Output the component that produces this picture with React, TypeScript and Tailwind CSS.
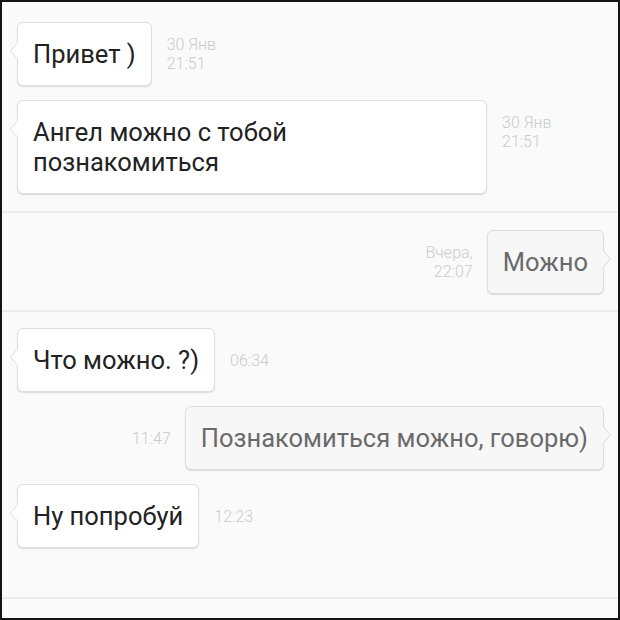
import React from "react";

type Msg = {
  id: number;
  text: React.ReactNode;
  time: string[];
  out?: boolean;
  wide?: boolean;
};

const groups: Msg[][] = [
  [
    { id: 1, text: "Привет )", time: ["30 Янв", "21:51"] },
    {
      id: 2,
      text: (
        <>
          Ангел можно с тобой
          <br />
          познакомиться
        </>
      ),
      time: ["30 Янв", "21:51"],
      wide: true,
    },
  ],
  [{ id: 3, text: "Можно", time: ["Вчера,", "22:07"], out: true }],
  [
    { id: 4, text: "Что можно. ?)", time: ["06:34"] },
    { id: 5, text: "Познакомиться можно, говорю)", time: ["11:47"], out: true },
    { id: 6, text: "Ну попробуй", time: ["12:23"] },
  ],
];

const Tail = ({ out, bg }: { out?: boolean; bg: string }) => (
  <svg
    width="9"
    height="18"
    viewBox="0 0 9 18"
    className={`absolute top-[19px] ${out ? "right-[-9px] scale-x-[-1]" : "left-[-9px]"}`}
  >
    <path d="M9 0 L1 9 L9 18 Z" fill={bg} />
    <path d="M9 0.5 L1.5 9 L9 17.5" fill="none" stroke="#dcdcdc" strokeWidth="1" />
  </svg>
);

const Time = ({ lines, out }: { lines: string[]; out?: boolean }) => (
  <div className="mt-[17px] h-[30px] flex items-center shrink-0">
    <div className={`text-[16px] leading-[19px] font-light text-[#cacaca] ${out ? "text-right" : "text-left"}`}>
      {lines.map((l) => (
        <div key={l}>{l}</div>
      ))}
    </div>
  </div>
);

const Bubble = ({ msg }: { msg: Msg }) => {
  const bg = msg.out ? "#f7f7f7" : "#ffffff";
  return (
    <div
      className={`relative rounded-[6px] border border-[#dedede] shadow-[0_1px_1px_rgba(0,0,0,0.13)] pl-[15px] pr-[15px] pt-[16px] pb-[16px] text-[25.5px] leading-[30px] ${
        msg.out ? "bg-[#f7f7f7] text-[#6a6a6a]" : "bg-white text-[#222222]"
      } ${msg.wide ? "w-[470px]" : "max-w-[470px]"}`}
    >
      <Tail out={msg.out} bg={bg} />
      {msg.text}
    </div>
  );
};

export default function App() {
  return (
    <div className="w-[620px] h-[620px] bg-[#fafafa] border-2 border-[#151515] overflow-hidden font-['Roboto',sans-serif]">
      {groups.map((g, gi) => (
        <div
          key={gi}
          className={`flex flex-col gap-[14px] pl-[15px] pr-[14px] border-b-2 border-[#ececec] ${
            gi === 0 ? "pt-[20px] pb-[17px]" : gi === 1 ? "pt-[17px] pb-[16px]" : "pt-[16px] pb-[49px]"
          }`}
        >
          {g.map((m) =>
            m.out ? (
              <div key={m.id} className="flex items-start justify-end gap-[14px]">
                <Time lines={m.time} out />
                <Bubble msg={m} />
              </div>
            ) : (
              <div key={m.id} className="flex items-start gap-[15px]">
                <Bubble msg={m} />
                <Time lines={m.time} />
              </div>
            )
          )}
        </div>
      ))}
    </div>
  );
}
